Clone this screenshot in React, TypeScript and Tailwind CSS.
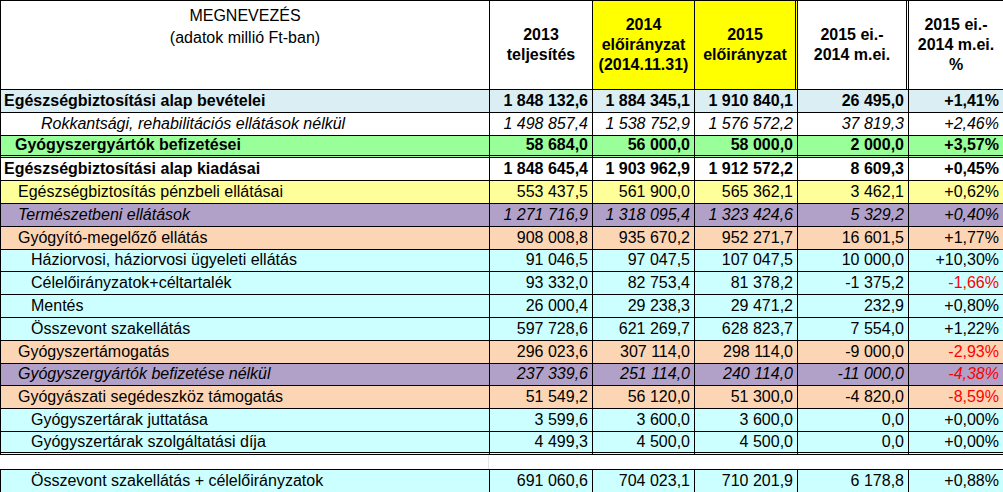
import React from "react";

type Row = {
  name: string;
  vals: string[];
  bg: string;
  indent: string;
  bold?: boolean;
  italic?: boolean;
  border?: string;
};

const B = "bg-[#daeef3]";
const W = "bg-white";
const G = "bg-[#99ff99]";
const Y = "bg-[#ffff99]";
const P = "bg-[#b1a0c7]";
const O = "bg-[#fcd5b4]";
const C = "bg-[#ccffff]";

const rows: Row[] = [
  { name: "Egészségbiztosítási alap bevételei", vals: ["1 848 132,6", "1 884 345,1", "1 910 840,1", "26 495,0", "+1,41%"], bg: B, indent: "pl-[3px]", bold: true },
  { name: "Rokkantsági, rehabilitációs ellátások nélkül", vals: ["1 498 857,4", "1 538 752,9", "1 576 572,2", "37 819,3", "+2,46%"], bg: W, indent: "pl-[40px]", italic: true },
  { name: "Gyógyszergyártók befizetései", vals: ["58 684,0", "56 000,0", "58 000,0", "2 000,0", "+3,57%"], bg: G, indent: "pl-[14px]", bold: true, border: "border-b-[3px] border-double" },
  { name: "Egészségbiztosítási alap kiadásai", vals: ["1 848 645,4", "1 903 962,9", "1 912 572,2", "8 609,3", "+0,45%"], bg: W, indent: "pl-[3px]", bold: true },
  { name: "Egészségbiztosítás pénzbeli ellátásai", vals: ["553 437,5", "561 900,0", "565 362,1", "3 462,1", "+0,62%"], bg: Y, indent: "pl-[17px]" },
  { name: "Természetbeni ellátások", vals: ["1 271 716,9", "1 318 095,4", "1 323 424,6", "5 329,2", "+0,40%"], bg: P, indent: "pl-[17px]", italic: true },
  { name: "Gyógyító-megelőző ellátás", vals: ["908 008,8", "935 670,2", "952 271,7", "16 601,5", "+1,77%"], bg: O, indent: "pl-[17px]" },
  { name: "Háziorvosi, háziorvosi ügyeleti ellátás", vals: ["91 046,5", "97 047,5", "107 047,5", "10 000,0", "+10,30%"], bg: C, indent: "pl-[30px]" },
  { name: "Célelőirányzatok+céltartalék", vals: ["93 332,0", "82 753,4", "81 378,2", "-1 375,2", "-1,66%"], bg: C, indent: "pl-[30px]" },
  { name: "Mentés", vals: ["26 000,4", "29 238,3", "29 471,2", "232,9", "+0,80%"], bg: C, indent: "pl-[30px]" },
  { name: "Összevont szakellátás", vals: ["597 728,6", "621 269,7", "628 823,7", "7 554,0", "+1,22%"], bg: C, indent: "pl-[30px]" },
  { name: "Gyógyszertámogatás", vals: ["296 023,6", "307 114,0", "298 114,0", "-9 000,0", "-2,93%"], bg: O, indent: "pl-[17px]" },
  { name: "Gyógyszergyártók befizetése nélkül", vals: ["237 339,6", "251 114,0", "240 114,0", "-11 000,0", "-4,38%"], bg: P, indent: "pl-[17px]", italic: true },
  { name: "Gyógyászati segédeszköz támogatás", vals: ["51 549,2", "56 120,0", "51 300,0", "-4 820,0", "-8,59%"], bg: O, indent: "pl-[17px]" },
  { name: "Gyógyszertárak juttatása", vals: ["3 599,6", "3 600,0", "3 600,0", "0,0", "+0,00%"], bg: C, indent: "pl-[30px]" },
  { name: "Gyógyszertárak szolgáltatási díja", vals: ["4 499,3", "4 500,0", "4 500,0", "0,0", "+0,00%"], bg: C, indent: "pl-[30px]", border: "border-b-[3px] border-double" },
];

const cols = "grid grid-cols-[489px_103px_102px_103px_111px_95px]";

function DataRow({ r }: { r: Row }) {
  const font = `${r.bold ? "font-bold" : ""} ${r.italic ? "italic" : ""}`;
  const bb = r.border ?? "border-b";
  return (
    <div className={`${cols} h-[22.8px] ${r.bg} ${font}`}>
      <div className={`${r.indent} border-r border-black ${bb} flex items-center whitespace-nowrap`}>{r.name}</div>
      {r.vals.map((v, i) => (
        <div
          key={i}
          className={`border-r border-black ${bb} flex items-center justify-end pr-[4px] whitespace-nowrap ${i === 4 && v.startsWith("-") ? "text-[#ff0000]" : ""}`}
        >
          {v}
        </div>
      ))}
    </div>
  );
}

export default function App() {
  return (
    <div className="w-[1003px] h-[492px] bg-white text-black text-[16px] leading-none overflow-hidden" style={{ fontFamily: "'Liberation Sans', Arial, sans-serif" }}>
      <div className="border-t border-l border-black">
        <div className={`${cols} h-[89px] border-b border-black text-center`}>
          <div className="border-r border-black pt-[4px] leading-[22px]">
            MEGNEVEZÉS
            <br />
            (adatok millió Ft-ban)
          </div>
          <div className="border-r border-black flex items-center justify-center font-bold leading-[20px]">2013<br />teljesítés</div>
          <div className="border-r border-black bg-[#ffff00] flex items-center justify-center font-bold leading-[20px]">2014<br />előirányzat<br />(2014.11.31)</div>
          <div className="border-r-[3px] border-double border-black bg-[#ffff00] flex items-center justify-center font-bold leading-[20px]">2015<br />előirányzat</div>
          <div className="border-r-[3px] border-double border-black flex items-center justify-center font-bold leading-[20px]">2015 ei.-<br />2014 m.ei.</div>
          <div className="border-r border-black flex items-center justify-center font-bold leading-[20px]">2015 ei.-<br />2014 m.ei.<br />%</div>
        </div>
        {rows.map((r, i) => (
          <DataRow key={i} r={r} />
        ))}
      </div>
      <div className={`${cols} h-[14px]`}>
        <div className="border-r border-[#e5e5e5]" />
      </div>
      <div className="border-t border-l border-black">
        <DataRow r={{ name: "Összevont szakellátás + célelőirányzatok", vals: ["691 060,6", "704 023,1", "710 201,9", "6 178,8", "+0,88%"], bg: C, indent: "pl-[30px]" }} />
      </div>
    </div>
  );
}
